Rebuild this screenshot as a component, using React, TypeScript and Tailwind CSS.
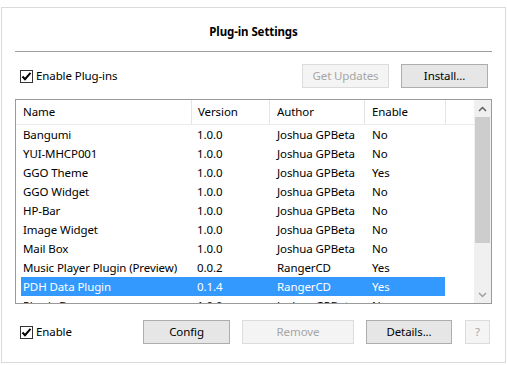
import React from "react";

const plugins = [
  { name: "Bangumi", version: "1.0.0", author: "Joshua GPBeta", enable: "No" },
  { name: "YUI-MHCP001", version: "1.0.0", author: "Joshua GPBeta", enable: "No" },
  { name: "GGO Theme", version: "1.0.0", author: "Joshua GPBeta", enable: "Yes" },
  { name: "GGO Widget", version: "1.0.0", author: "Joshua GPBeta", enable: "No" },
  { name: "HP-Bar", version: "1.0.0", author: "Joshua GPBeta", enable: "No" },
  { name: "Image Widget", version: "1.0.0", author: "Joshua GPBeta", enable: "No" },
  { name: "Mail Box", version: "1.0.0", author: "Joshua GPBeta", enable: "No" },
  { name: "Music Player Plugin (Preview)", version: "0.0.2", author: "RangerCD", enable: "Yes" },
  { name: "PDH Data Plugin", version: "0.1.4", author: "RangerCD", enable: "Yes", selected: true },
  { name: "Physic Box", version: "1.0.0", author: "Joshua GPBeta", enable: "No" },
];

function CheckBox({ label }: { label: string }) {
  return (
    <div className="flex items-center gap-[3px]">
      <div className="w-[13px] h-[13px] border border-[#333333] bg-white flex items-center justify-center">
        <svg width="11" height="11" viewBox="0 0 11 11">
          <path d="M1.5 5.5 L4 8.2 L9.5 1.8" fill="none" stroke="#000" strokeWidth="2" />
        </svg>
      </div>
      <span className="leading-[16px]">{label}</span>
    </div>
  );
}

function Button({ label, width, disabled }: { label: string; width: string; disabled?: boolean }) {
  return (
    <div
      className={`${width} h-[24px] flex items-center justify-center border ${
        disabled ? "bg-[#f4f4f4] border-[#dcdcdc] text-[#a6a6a6]" : "bg-[#e6e6e6] border-[#adadad] text-black"
      }`}
    >
      {label}
    </div>
  );
}

export default function App() {
  return (
    <div
      className="w-[507px] h-[365px] bg-white pt-[7px] pl-[1px] text-[11.5px] tracking-[-0.1px] text-black"
      style={{ fontFamily: "'Noto Sans', 'Open Sans', sans-serif" }}
    >
      <div className="w-[505px] h-[356px] border border-[#dadada] flex flex-col">
        <div className="pt-[16px] text-center font-bold leading-[16px]">Plug-in Settings</div>
        <div className="ml-[13px] mt-[11px] w-[477px] h-px bg-[#a0a0a0]" />

        <div className="mt-[12px] h-[24px] flex items-center pl-[18px]">
          <CheckBox label="Enable Plug-ins" />
          <div className="ml-auto mr-[17px] flex gap-[12px]">
            <Button label="Get Updates" width="w-[87px]" disabled />
            <Button label="Install..." width="w-[87px]" />
          </div>
        </div>

        <div className="mt-[11px] ml-[13px] w-[477px] h-[205px] shrink-0 border border-[#9a9a9a] flex overflow-hidden">
          <div className="w-[458px] flex flex-col">
            <div className="h-[25px] shrink-0 flex border-b border-[#ececec]">
              <div className="w-[176px] pl-[7px] border-r border-[#e5e5e5] flex items-center">Name</div>
              <div className="w-[78px] pl-[6px] border-r border-[#e5e5e5] flex items-center">Version</div>
              <div className="w-[95px] pl-[7px] border-r border-[#e5e5e5] flex items-center">Author</div>
              <div className="w-[81px] pl-[7px] border-r border-[#e5e5e5] flex items-center">Enable</div>
            </div>
            {plugins.map((p) => (
              <div key={p.name} className="h-[19px] shrink-0 flex pl-[5px]">
                <div className={`w-[424px] flex items-center ${p.selected ? "bg-[#3399ff] text-white" : ""}`}>
                  <div className="w-[170px] pl-[2px] whitespace-nowrap">{p.name}</div>
                  <div className="w-[78px] pl-[6px]">{p.version}</div>
                  <div className="w-[96px] pl-[8px] whitespace-nowrap">{p.author}</div>
                  <div className="w-[80px] pl-[7px]">{p.enable}</div>
                </div>
              </div>
            ))}
          </div>
          <div className="w-[17px] bg-[#f0f0f0] flex flex-col items-center">
            <div className="h-[17px] shrink-0 flex items-center justify-center">
              <svg width="9" height="6" viewBox="0 0 9 6">
                <path d="M1 5 L4.5 1.5 L8 5" fill="none" stroke="#606060" strokeWidth="1.5" />
              </svg>
            </div>
            <div className="w-[15px] h-[126px] shrink-0 bg-[#cdcdcd]" />
            <div className="mt-auto h-[17px] shrink-0 flex items-center justify-center">
              <svg width="9" height="6" viewBox="0 0 9 6">
                <path d="M1 1 L4.5 4.5 L8 1" fill="none" stroke="#a0a0a0" strokeWidth="1.5" />
              </svg>
            </div>
          </div>
        </div>

        <div className="mt-[16px] h-[24px] flex items-center pl-[18px]">
          <div className="w-[123px]">
            <CheckBox label="Enable" />
          </div>
          <div className="flex gap-[12px]">
            <Button label="Config" width="w-[87px]" />
            <Button label="Remove" width="w-[112px]" disabled />
            <Button label="Details..." width="w-[86px]" />
            <Button label="?" width="w-[25px] ml-px" disabled />
          </div>
        </div>
      </div>
    </div>
  );
}
